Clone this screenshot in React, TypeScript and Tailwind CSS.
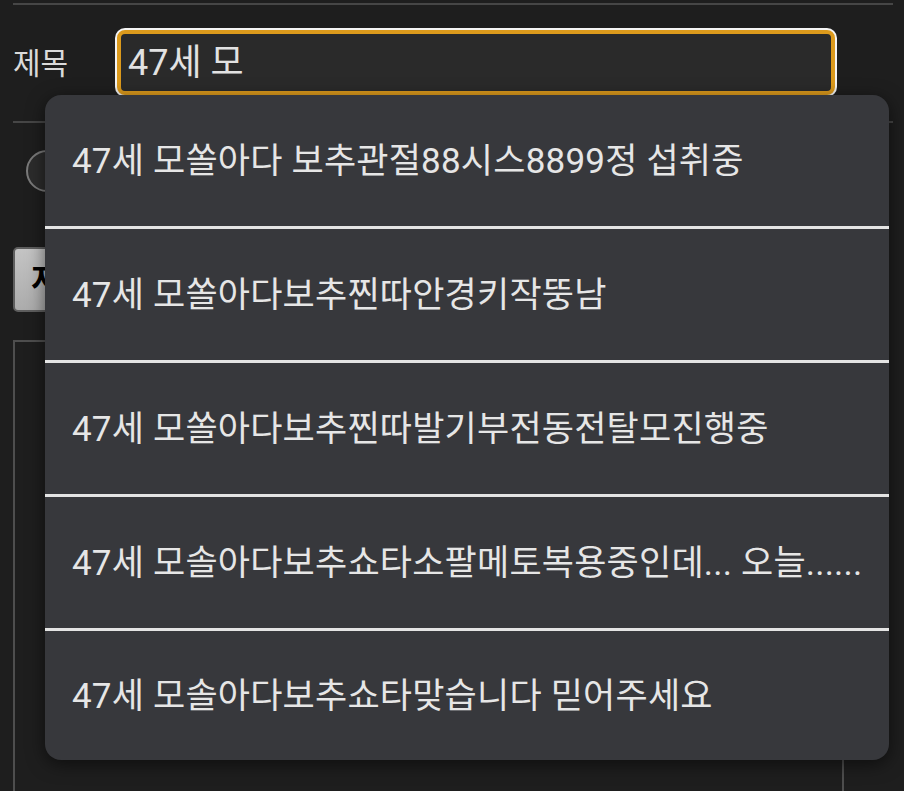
import type { ReactNode } from "react";

const suggestions = [
  "47세 모쏠아다 보추관절88시스8899정 섭취중",
  "47세 모쏠아다보추찐따안경키작뚱남",
  "47세 모쏠아다보추찐따발기부전동전탈모진행중",
  "47세 모솔아다보추쇼타소팔메토복용중인데... 오늘......",
  "47세 모솔아다보추쇼타맞습니다 믿어주세요",
];

const font = "font-['Roboto','Noto_Sans_CJK_KR',sans-serif]";

function Divider({ className }: { className?: string }) {
  return <div className={"h-[2px] bg-[#464646] " + (className ?? "")} />;
}

function SuggestionItem({ children, last }: { children: ReactNode; last?: boolean }) {
  return (
    <div
      className={
        "flex items-center px-[27px] pt-[3px] text-[35px] tracking-[0.2px] text-[#e6e6e6] whitespace-nowrap " +
        (last ? "h-[129px]" : "h-[134px] border-b-[3px] border-[#e4e4e4]")
      }
    >
      {children}
    </div>
  );
}

export default function App() {
  return (
    <div className={"relative w-[904px] h-[791px] overflow-hidden bg-[#1e1e1e] " + font}>
      <div className="pl-[13px] pr-[11px] pt-[3px]">
        <Divider />

        <div className="flex items-center mt-[23px]">
          <div className="w-[102px] text-[30px] text-[#dadada] leading-none pt-[2px]">제목</div>
          <div className="w-[722px] h-[69px] rounded-[10px] bg-[#f4f4f4] p-[2px]">
            <div className="h-full rounded-[8px] border-[4px] border-[#dc9a1c] bg-[#2a2a2a] flex items-center pl-[7px] text-[36px] text-[#e2e2e2]">
              47세 모
            </div>
          </div>
        </div>

        <Divider className="mt-[24px]" />

        <div className="mt-[27px] pl-[13px]">
          <div className="w-[42px] h-[42px] rounded-full border-[2px] border-[#7a7a7a] bg-[#2c2c2c]" />
        </div>

        <div className="mt-[55px]">
          <button className="h-[65px] px-[16px] rounded-[5px] border-[2px] border-[#5e5e5e] bg-gradient-to-b from-[#c4c4c4] to-[#acacac] text-[32px] font-bold text-black">
            저장
          </button>
        </div>

        <div className="mt-[28px] w-[831px] h-[500px] border-[2px] border-[#4e4e4e]" />
      </div>

      <div className="absolute left-[45px] top-[95px] w-[844px] rounded-[16px] bg-[#37383c] shadow-[0_4px_18px_rgba(0,0,0,0.55)] overflow-hidden">
        {suggestions.map((s, i) => (
          <SuggestionItem key={s} last={i === suggestions.length - 1}>
            {s}
          </SuggestionItem>
        ))}
      </div>
    </div>
  );
}
